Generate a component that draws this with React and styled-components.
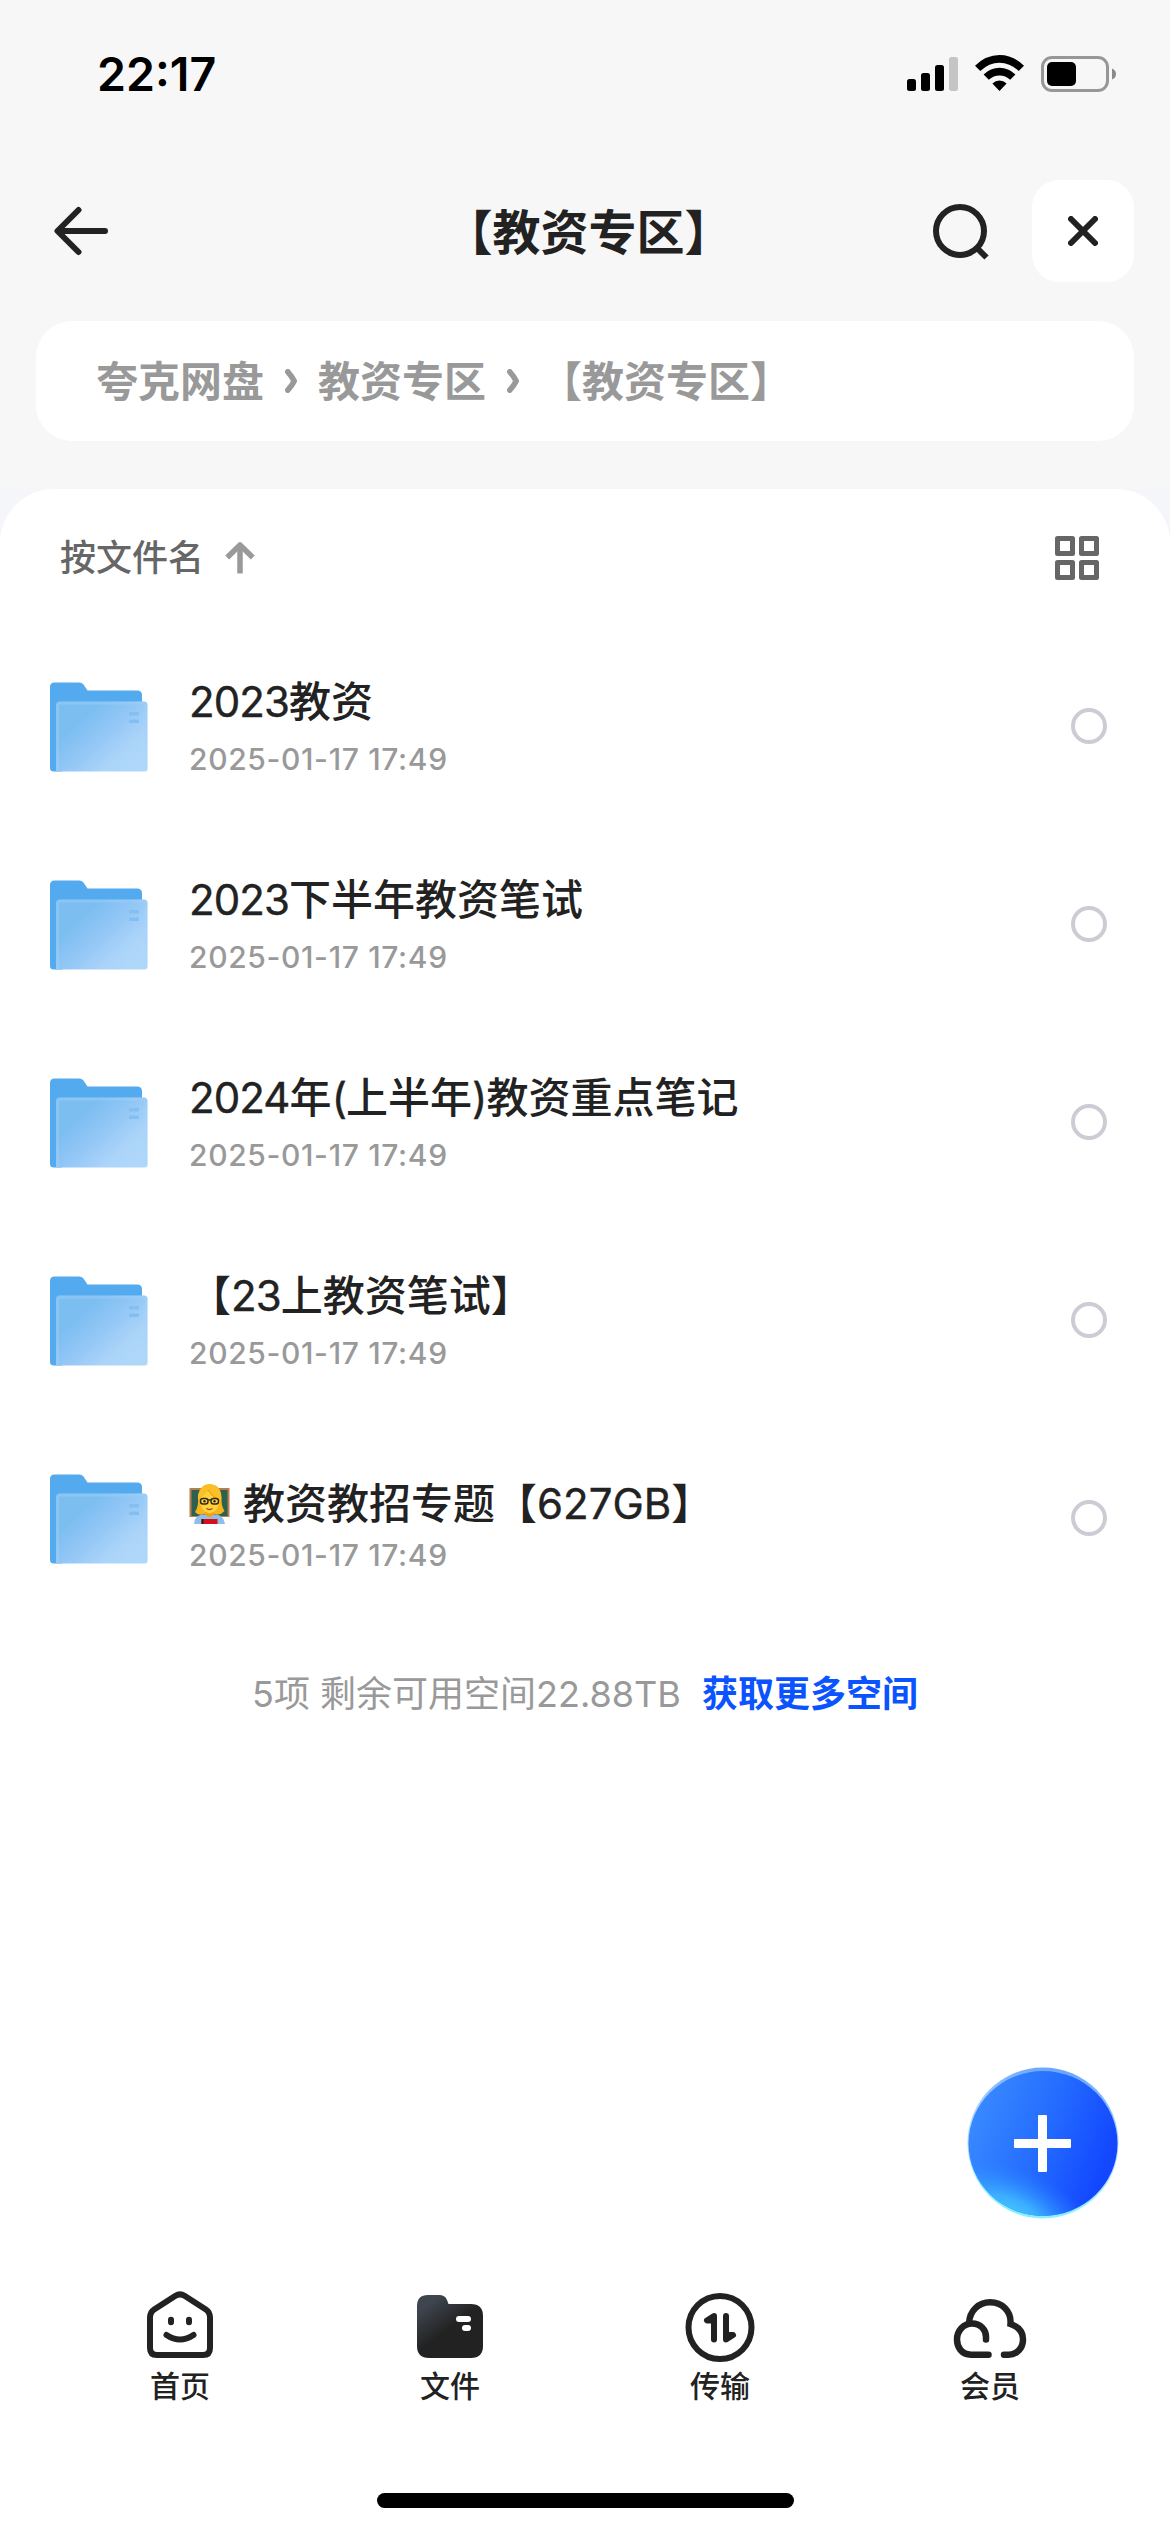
import React, { useState } from 'react';
import styled, { createGlobalStyle } from 'styled-components';

const GlobalStyle = createGlobalStyle`
  * {
    box-sizing: border-box;
  }

  body {
    margin: 0;
    background: #fff;
    font-family: Inter, 'Noto Sans CJK SC', sans-serif;
    color: #222;
  }

  button {
    padding: 0;
    border: none;
    background: none;
    font: inherit;
    color: inherit;
    cursor: pointer;
  }

  svg {
    display: block;
    flex: none;
  }
`;

const Screen = styled.div`
  position: relative;
  display: flex;
  flex-direction: column;
  width: 1170px;
  height: 2532px;
  overflow: hidden;
  background: #fff;
`;

const Header = styled.header`
  height: 489px;
  background: #f7f7f7;
`;

const StatusBar = styled.div`
  display: flex;
  justify-content: space-between;
  height: 141px;
  padding: 46px 54px 0 97px;
`;

const Clock = styled.span`
  height: 56px;
  font-size: 46.5px;
  font-weight: 600;
  line-height: 56px;
  color: #000;
`;

const StatusIcons = styled.div`
  display: flex;
  align-items: flex-start;
  gap: 17px;
  padding-top: 9px;
`;

const NavBar = styled.div`
  display: grid;
  grid-template-columns: 1fr auto 1fr;
  align-items: center;
  height: 180px;
  padding: 0 36px 0 54px;
`;

const NavTitle = styled.h1`
  margin: 0;
  padding: 3px 11px 0 0;
  font-size: 48px;
  font-weight: 600;
  line-height: 60px;
`;

const BackButton = styled.button`
  justify-self: start;
`;

const NavActions = styled.div`
  display: flex;
  align-items: center;
  justify-content: flex-end;
  gap: 42px;
`;

const CloseButton = styled.button`
  display: flex;
  align-items: center;
  justify-content: center;
  width: 102px;
  height: 102px;
  border-radius: 27px;
  background: #fff;
`;

const Breadcrumb = styled.nav`
  display: flex;
  align-items: center;
  gap: 21px;
  height: 120px;
  margin: 0 36px;
  padding: 0 60px;
  border-radius: 36px;
  background: #fff;
`;

const Crumb = styled.span`
  padding-top: 2px;
  font-size: 42px;
  font-weight: 600;
  line-height: 60px;
  color: #999;
`;

const SheetBackdrop = styled.div`
  flex: 1;
  background: linear-gradient(#f4f6f9 60px, #fff 60px);
`;

const Sheet = styled.main`
  height: 100%;
  border-radius: 54px 54px 0 0;
  background: #fff;
`;

const SortBar = styled.div`
  display: flex;
  align-items: center;
  justify-content: space-between;
  height: 138px;
  padding: 0 71px 0 60px;
`;

const SortButton = styled.button`
  display: flex;
  align-items: center;
  gap: 21px;
  font-size: 36px;
  font-weight: 500;
  line-height: 50px;
  color: #666;
`;

const FileList = styled.ul`
  margin: 0;
  padding: 0;
  list-style: none;
`;

const FileRow = styled.li`
  display: flex;
  align-items: center;
  height: 198px;
  padding: 0 63px 0 48px;
`;

const FileInfo = styled.div`
  flex: 1;
  padding: ${({ $emoji }) => ($emoji ? '14px' : '0')} 0 0 39px;
`;

const FileName = styled.div`
  display: flex;
  align-items: center;
  gap: 13px;
  margin-bottom: ${({ $emoji }) => ($emoji ? '6px' : '12px')};
  font-size: 42px;
  font-weight: 500;
  line-height: 54px;
  white-space: pre;
`;

const Latin = styled.span`
  font-weight: 400;
  letter-spacing: ${({ $tight }) => ($tight ? '-0.9px' : '0')};
  -webkit-text-stroke: 0.4px #222;
`;

const FileDate = styled.div`
  font-size: 30px;
  font-weight: 500;
  line-height: 36px;
  letter-spacing: 0.65px;
  color: #999;
`;

const Radio = styled.button`
  width: 36px;
  height: 36px;
  border: 4px solid ${({ $checked }) => ($checked ? '#0a53ff' : '#ccccd4')};
  border-radius: 50%;
`;

const Summary = styled.p`
  display: flex;
  justify-content: center;
  gap: 21px;
  margin: 50px 0 0;
  font-size: 36px;
  line-height: 54px;
  color: #999;
`;

const MoreSpace = styled.a`
  font-weight: 600;
  color: #0a53ff;
`;

const AddButton = styled.button`
  position: absolute;
  right: 51px;
  bottom: 313px;
`;

const TabBar = styled.nav`
  display: grid;
  grid-template-columns: repeat(4, 1fr);
  height: 207px;
  padding: 0 45px;
  background: #fff;
`;

const Tab = styled.button`
  display: flex;
  flex-direction: column;
  align-items: center;
  gap: 2px;
  font-size: 30px;
  font-weight: 500;
  line-height: 40px;
`;

const HomeIndicator = styled.div`
  display: flex;
  justify-content: center;
  height: 39px;
  flex: none;

  &::after {
    content: '';
    width: 417px;
    height: 15px;
    border-radius: 8px;
    background: #000;
  }
`;

const SignalIcon = () => (
  <svg width="51" height="38" viewBox="0 0 51 38">
    <rect x="0" y="24" width="9" height="12" rx="2.5" />
    <rect x="14" y="18" width="9" height="18" rx="2.5" />
    <rect x="28" y="10" width="9" height="26" rx="2.5" />
    <rect x="42" y="2" width="9" height="34" rx="2.5" fill="#c5c5c5" />
  </svg>
);

const WifiIcon = () => (
  <svg width="49" height="38" viewBox="0 0 49 38">
    <path d="M0 10.7Q11 0 24.5 0T49 10.7L43.7 16Q35 7.7 24.5 7.7T5.3 16Z" />
    <path d="M8.6 19.4Q15.5 12.8 24.5 12.8T40.4 19.4L35.2 24.7Q30.5 20.4 24.5 20.4T13.8 24.7Z" />
    <path d="M17.4 28.4Q20.5 25.4 24.5 25.4T31.6 28.4L24.5 36Z" />
  </svg>
);

const BatteryIcon = () => (
  <svg width="75" height="38" viewBox="0 0 75 38">
    <rect x="1.5" y="2.5" width="65" height="33" rx="9.5" fill="none" stroke="#979797" strokeWidth="3" />
    <rect x="6" y="7" width="29" height="24" rx="5" />
    <path d="M71 13.500Q75 15 75 19T71 24.500Z" fill="#8a8a8a" />
  </svg>
);

const BackIcon = () => (
  <svg width="54" height="50" viewBox="0 0 54 50" fill="none" stroke="#222" strokeWidth="6" strokeLinecap="round" strokeLinejoin="round">
    <path d="M51 25H5M24.5 4L3.5 25L24.5 46" />
  </svg>
);

const SearchIcon = () => (
  <svg width="57" height="58" viewBox="0 0 57 58" fill="none" stroke="#222" strokeWidth="6">
    <circle cx="27" cy="29" r="24" />
    <path d="M44.5 46.5L53.5 55.5" />
  </svg>
);

const CloseIcon = () => (
  <svg width="30" height="30" viewBox="0 0 30 30" stroke="#222" strokeWidth="6" strokeLinecap="round">
    <path d="M3 3L27 27M27 3L3 27" />
  </svg>
);

const ChevronIcon = () => (
  <svg width="12" height="24" viewBox="0 0 12 24" fill="none" stroke="#999" strokeWidth="5.6" strokeLinecap="round" strokeLinejoin="round">
    <path d="M2.8 2.8Q7 7.5 9.2 12Q7 16.5 2.8 21.2" />
  </svg>
);

const SortArrowIcon = () => (
  <svg width="30" height="32" viewBox="0 0 30 32" fill="none" stroke="#999" strokeWidth="5.5">
    <path d="M15 4V31.5" />
    <path d="M2.2 15.5L15 3L27.8 15.5" strokeLinejoin="round" />
  </svg>
);

const GridIcon = () => (
  <svg width="44" height="44" viewBox="0 0 44 44" fill="none" stroke="#666" strokeWidth="5" strokeLinejoin="round">
    <rect x="2.5" y="2.5" width="15" height="15" />
    <rect x="26.5" y="2.5" width="15" height="15" />
    <rect x="2.5" y="26.5" width="15" height="15" />
    <rect x="26.5" y="26.5" width="15" height="15" />
  </svg>
);

const FolderIcon = () => (
  <svg width="102" height="92" viewBox="0 -1 102 92">
    <defs>
      <linearGradient id="folderFront" gradientUnits="userSpaceOnUse" x1="20" y1="28" x2="78" y2="92">
        <stop offset="0" stopColor="#7dbef1" />
        <stop offset="0.2" stopColor="#7dbef1" />
        <stop offset="0.5" stopColor="#93c7f6" />
        <stop offset="0.8" stopColor="#abd4f9" />
        <stop offset="1" stopColor="#afd7fa" />
      </linearGradient>
    </defs>
    <path d="M2 6Q2 1.5 6.500 1.500H31Q34 1.500 35.500 3.600L39.500 9.500H89Q94 9.500 94 14V30H14V90.500H6Q2 90.500 2 87Z" fill="#54aaee" />
    <path d="M8 24Q8 20.500 11.500 20.500H96Q99.500 20.500 99.500 24V87Q99.500 90.500 95.500 90.500H8Z" fill="url(#folderFront)" />
    <path d="M9.500 90.500V25Q9.500 22 12.500 22H95Q98 22 98 25V90.500" fill="none" stroke="#a5d3f8" strokeWidth="3" opacity="0.35" />
    <rect x="81" y="31" width="10" height="3.500" fill="#84bff4" />
    <rect x="81" y="38.500" width="10" height="3.500" fill="#84bff4" />
  </svg>
);

const TeacherEmoji = () => (
  <svg width="41" height="40" viewBox="0 0 41 40">
    <rect x="0.5" y="4" width="40" height="29" fill="#b97e50" />
    <rect x="2.500" y="6" width="36" height="26" fill="#2c6150" />
    <path d="M5 40Q5 32 13 30.500H28Q35 32 36 40Z" fill="#8fbdec" />
    <path d="M6 28Q10 22 9 13Q11 0 21 0Q32 1 32.500 13Q32 22 35.500 27Q31 32 26 30H15Q9 32 6 28Z" fill="#f7b41c" />
    <path d="M16 26H25V31Q20.500 35 16 31Z" fill="#eda414" />
    <path d="M11 16Q12 8 20 7Q30 8 30 16Q30 28 20.500 29.500Q11 28 11 16Z" fill="#fed23c" />
    <path d="M9 16Q8 2 21 0.500Q34 3 32 18Q23 13.500 19 6Q16 11 9 16Z" fill="#fbbf28" />
    <path d="M19 6Q23 13 31 16.500" fill="none" stroke="#de8f0c" strokeWidth="0.800" />
    <g fill="none" stroke="#352718" strokeWidth="1.400">
      <rect x="11.500" y="14.500" width="7.500" height="5.500" rx="2.500" />
      <rect x="22" y="14.500" width="7.500" height="5.500" rx="2.500" />
      <path d="M19 16H22" />
    </g>
    <circle cx="15.500" cy="17.200" r="1.200" fill="#352718" />
    <circle cx="25.500" cy="17.200" r="1.200" fill="#352718" />
    <path d="M17.500 24.500Q20.500 26.500 23.500 24.500" fill="none" stroke="#a5442a" strokeWidth="1.300" />
    <rect x="12.500" y="35" width="16" height="5" fill="#d4101c" />
    <rect x="12.500" y="35" width="2" height="5" fill="#33151a" />
  </svg>
);

const AddIcon = () => (
  <svg width="152" height="152" viewBox="0 0 152 152">
    <defs>
      <linearGradient id="addBase" x1="0.05" y1="0.3" x2="0.95" y2="0.62">
        <stop offset="0" stopColor="#3888ff" />
        <stop offset="0.5" stopColor="#246cff" />
        <stop offset="1" stopColor="#1246ff" />
      </linearGradient>
      <radialGradient
        id="addGlow"
        gradientUnits="userSpaceOnUse"
        cx="0"
        cy="0"
        r="1"
        gradientTransform="translate(44 150) rotate(24) scale(100 50)"
      >
        <stop offset="0" stopColor="#48ccff" />
        <stop offset="0.35" stopColor="#40baff" stopOpacity="0.85" />
        <stop offset="1" stopColor="#2880ff" stopOpacity="0" />
      </radialGradient>
      <linearGradient id="addRim" x1="0.6" y1="0" x2="0.4" y2="1">
        <stop offset="0" stopColor="#67a5fb" />
        <stop offset="0.45" stopColor="#6fb2ff" stopOpacity="0.5" />
        <stop offset="0.75" stopColor="#a4f0ff" />
        <stop offset="1" stopColor="#84f0ff" />
      </linearGradient>
    </defs>
    <circle cx="76" cy="76" r="75.500" fill="url(#addRim)" />
    <ellipse cx="76" cy="76.500" rx="74.500" ry="72.500" fill="url(#addBase)" />
    <ellipse cx="76" cy="76.500" rx="74.500" ry="72.500" fill="url(#addGlow)" />
    <rect x="47" y="72" width="57" height="9" rx="1" fill="#fff" />
    <rect x="71" y="48" width="9" height="57" rx="1" fill="#fff" />
  </svg>
);

const HomeIcon = () => (
  <svg width="78" height="78" viewBox="0 0 78 78" fill="none" stroke="#222" strokeWidth="6" strokeLinecap="round" strokeLinejoin="round">
    <path d="M34.500 9.800Q39 7 43.500 9.800L64.500 23.300Q69 26.200 69 31.500V62Q69 69 62 69H16Q9 69 9 62V31.500Q9 26.200 13.500 23.300Z" />
    <path d="M30 33.800V36.200M48 33.800V36.200M25.500 49Q39 58 52.500 49" />
  </svg>
);

const FilesIcon = () => (
  <svg width="78" height="78" viewBox="0 0 78 78">
    <defs>
      <linearGradient id="filesFill" gradientUnits="userSpaceOnUse" x1="14" y1="14" x2="36" y2="44">
        <stop offset="0.150" stopColor="#3e454f" />
        <stop offset="1" stopColor="#222" />
      </linearGradient>
    </defs>
    <path d="M6 20Q6 9 17 9H28Q34 9 36 14L37.500 18H60Q72 18 72 30V60Q72 72 60 72H18Q6 72 6 60Z" fill="url(#filesFill)" />
    <rect x="45" y="30" width="15" height="6" rx="3" fill="#fff" />
    <rect x="51" y="39" width="9" height="6" rx="3" fill="#fff" />
  </svg>
);

const TransferIcon = () => (
  <svg width="78" height="78" viewBox="0 0 78 78" fill="none" stroke="#222" strokeWidth="6" strokeLinecap="round" strokeLinejoin="round">
    <circle cx="39" cy="41.500" r="31.500" />
    <path d="M33 53.500V30L26 34.500H33" />
    <path d="M45 30V53.500L52 49H45" />
  </svg>
);

const MemberIcon = () => (
  <svg width="78" height="78" viewBox="0 0 78 78" fill="none" stroke="#222" strokeWidth="6.500" strokeLinecap="round">
    <path d="M37.500 68.700H20C10.500 68.700 6 61 6 53.500C6 45 12.500 37.500 21 37.500C29.500 37.500 35 43.500 35 51V53.500" />
    <path d="M18 37.500C18.500 24.500 28 16.300 39 16.300C51 16.300 60.500 25 59.500 38C68 41 72 47 72 53.500C72 62 66 68.700 57.500 68.700H53" />
  </svg>
);

const crumbs = ['夸克网盘', '教资专区', '【教资专区】'];

const files = [
  { name: '2023教资', date: '2025-01-17 17:49' },
  { name: '2023下半年教资笔试', date: '2025-01-17 17:49' },
  { name: '2024年(上半年)教资重点笔记', date: '2025-01-17 17:49' },
  { name: '【23上教资笔试】', date: '2025-01-17 17:49' },
  { name: '教资教招专题【627GB】', date: '2025-01-17 17:49', emoji: true },
];

const tabs = [
  { label: '首页', Icon: HomeIcon },
  { label: '文件', Icon: FilesIcon },
  { label: '传输', Icon: TransferIcon },
  { label: '会员', Icon: MemberIcon },
];

// Latin runs are lighter than the Chinese text around them,
// and plain numbers are also set a little tighter
const renderName = (name) =>
  name.split(/([\w()]+)/).map((part, index) =>
    index % 2 ? (
      <Latin key={index} $tight={/^[\d()]+$/.test(part)}>
        {part}
      </Latin>
    ) : (
      part
    )
  );

const App = () => {
  const [selected, setSelected] = useState([]);

  const toggle = (name) => {
    setSelected(
      selected.includes(name)
        ? selected.filter((item) => item !== name)
        : [...selected, name]
    );
  };

  return (
    <Screen>
      <GlobalStyle />
      <Header>
        <StatusBar>
          <Clock>22:17</Clock>
          <StatusIcons>
            <SignalIcon />
            <WifiIcon />
            <BatteryIcon />
          </StatusIcons>
        </StatusBar>
        <NavBar>
          <BackButton aria-label="返回">
            <BackIcon />
          </BackButton>
          <NavTitle>【教资专区】</NavTitle>
          <NavActions>
            <button aria-label="搜索">
              <SearchIcon />
            </button>
            <CloseButton aria-label="关闭">
              <CloseIcon />
            </CloseButton>
          </NavActions>
        </NavBar>
        <Breadcrumb>
          {crumbs.map((crumb, index) => (
            <React.Fragment key={crumb}>
              {index > 0 && <ChevronIcon />}
              <Crumb>{crumb}</Crumb>
            </React.Fragment>
          ))}
        </Breadcrumb>
      </Header>

      <SheetBackdrop>
        <Sheet>
          <SortBar>
            <SortButton>
              按文件名
              <SortArrowIcon />
            </SortButton>
            <button aria-label="网格视图">
              <GridIcon />
            </button>
          </SortBar>
          <FileList>
            {files.map((file) => (
              <FileRow key={file.name}>
                <FolderIcon />
                <FileInfo $emoji={file.emoji}>
                  <FileName $emoji={file.emoji}>
                    {file.emoji && <TeacherEmoji />}
                    <span>{renderName(file.name)}</span>
                  </FileName>
                  <FileDate>{file.date}</FileDate>
                </FileInfo>
                <Radio
                  aria-label={file.name}
                  $checked={selected.includes(file.name)}
                  onClick={() => toggle(file.name)}
                />
              </FileRow>
            ))}
          </FileList>
          <Summary>
            <span>5项 剩余可用空间22.88TB</span>
            <MoreSpace>获取更多空间</MoreSpace>
          </Summary>
        </Sheet>
      </SheetBackdrop>

      <AddButton aria-label="添加">
        <AddIcon />
      </AddButton>

      <TabBar>
        {tabs.map(({ label, Icon }) => (
          <Tab key={label}>
            <Icon />
            {label}
          </Tab>
        ))}
      </TabBar>
      <HomeIndicator />
    </Screen>
  );
};

export default App;
